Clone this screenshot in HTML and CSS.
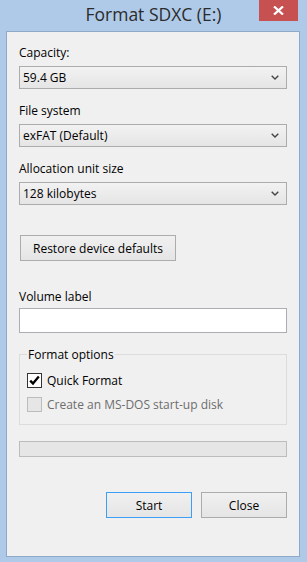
FILE: index.html
```html
<!DOCTYPE html>
<html lang="en">
<head>
    <meta charset="UTF-8">
    <meta name="viewport" content="width=device-width, initial-scale=1.0">
    <title>Format SDXC (E:)</title>
    <link rel="stylesheet" href="styles.css">
</head>
<body>

<div class="window">
    <div class="titlebar">
        <span class="title">Format SDXC (E:)</span>
        <button class="close-btn" aria-label="Close">
            <svg width="11" height="9" viewBox="0 0 11 9">
                <path d="M1 0.5 L10 8.5 M10 0.5 L1 8.5" stroke="#fff" stroke-width="2.3" fill="none"/>
            </svg>
        </button>
    </div>

    <div class="panel">
        <div class="field">
            <label class="field-label">Capacity:</label>
            <div class="combo">
                <span>59.4 GB</span>
                <svg class="chevron" width="8" height="5" viewBox="0 0 8 5"><path d="M0.7 0.7 L4 4 L7.3 0.7" stroke="#444" stroke-width="1.4" fill="none"/></svg>
            </div>
        </div>

        <div class="field">
            <label class="field-label">File system</label>
            <div class="combo">
                <span>exFAT (Default)</span>
                <svg class="chevron" width="8" height="5" viewBox="0 0 8 5"><path d="M0.7 0.7 L4 4 L7.3 0.7" stroke="#444" stroke-width="1.4" fill="none"/></svg>
            </div>
        </div>

        <div class="field">
            <label class="field-label">Allocation unit size</label>
            <div class="combo">
                <span>128 kilobytes</span>
                <svg class="chevron" width="8" height="5" viewBox="0 0 8 5"><path d="M0.7 0.7 L4 4 L7.3 0.7" stroke="#444" stroke-width="1.4" fill="none"/></svg>
            </div>
        </div>

        <button class="btn restore-btn">Restore device defaults</button>

        <div class="field volume">
            <label class="field-label">Volume label</label>
            <div class="textbox"></div>
        </div>

        <fieldset class="options">
            <legend>Format options</legend>
            <div class="check-row">
                <span class="checkbox">
                    <svg width="13" height="13" viewBox="0 0 13 13"><path d="M2.2 6.6 L5 9.6 L10.8 2.6" stroke="#000" stroke-width="2.3" fill="none"/></svg>
                </span>
                <span>Quick Format</span>
            </div>
            <div class="check-row disabled">
                <span class="checkbox"></span>
                <span>Create an MS-DOS start-up disk</span>
            </div>
        </fieldset>

        <div class="progress"></div>

        <div class="actions">
            <button class="btn default-btn">Start</button>
            <button class="btn">Close</button>
        </div>
    </div>
</div>

</body>
</html>
```

FILE: styles.css
```css
body {
    margin: 0;
    font-family: "Open Sans", sans-serif;
    font-size: 12px;
    color: #000;
}

.window {
    width: 307px;
    height: 562px;
    background-color: #aecae8;
    overflow: hidden;
}

.titlebar {
    height: 31px;
    display: grid;
    grid-template-columns: 1fr auto 1fr;
}

.title {
    grid-column: 2;
    font-size: 17.5px;
    line-height: 28px;
    color: #2b2b2b;
    white-space: nowrap;
}

.close-btn {
    grid-column: 3;
    justify-self: end;
    align-self: start;
    width: 39px;
    height: 21px;
    margin-right: 9px;
    padding: 0;
    border: none;
    background-color: #c75050;
    display: flex;
    align-items: center;
    justify-content: center;
}

.panel {
    height: 526px;
    margin: 0 7px 0 6px;
    box-sizing: border-box;
    border: 1px solid #8fa9c8;
    background-color: #f0f0f0;
    padding: 13px 12px 0;
}

.field {
    margin-bottom: 14px;
}

.field-label {
    display: block;
    line-height: 15px;
    margin-bottom: 6px;
}

.combo {
    height: 23px;
    box-sizing: border-box;
    border: 1px solid #acacac;
    background: linear-gradient(#f2f2f2, #e5e5e5);
    display: flex;
    align-items: center;
    justify-content: space-between;
    padding: 0 7px 0 3px;
    line-height: 21px;
}

.btn {
    font-family: "Open Sans", sans-serif;
    font-size: 12px;
    color: #000;
    height: 26px;
    padding: 0;
    box-sizing: border-box;
    border: 1px solid #acacac;
    background: linear-gradient(#f0f0f0, #e5e5e5);
}

.restore-btn {
    display: block;
    width: 156px;
    margin: 30px 0 0 1px;
}

.volume {
    margin: 28px 0 0;
}

.volume .field-label {
    margin-bottom: 4px;
}

.textbox {
    height: 25px;
    box-sizing: border-box;
    border: 1px solid #abadb3;
    background-color: #fff;
}

.options {
    margin: 14px 0 0;
    padding: 11px 8px 12px 7px;
    border: 1px solid #dcdcdc;
}

.options legend {
    padding: 0 1px;
    line-height: 15px;
}

.check-row {
    display: flex;
    align-items: center;
    gap: 5px;
    height: 15px;
    line-height: 15px;
}

.check-row + .check-row {
    margin-top: 9px;
}

.checkbox {
    width: 15px;
    height: 15px;
    box-sizing: border-box;
    border: 1px solid #333;
    background-color: #fff;
    display: flex;
    align-items: center;
    justify-content: center;
}

.disabled {
    color: #6d6d6d;
}

.disabled .checkbox {
    border-color: #bcbcbc;
    background-color: #e6e6e6;
}

.progress {
    height: 16px;
    margin-top: 16px;
    box-sizing: border-box;
    border: 1px solid #bcbcbc;
    background-color: #e6e6e6;
}

.actions {
    display: flex;
    justify-content: flex-end;
    gap: 9px;
    margin-top: 35px;
}

.actions .btn {
    width: 86px;
}

.default-btn {
    border-color: #3c9ef5;
}
```
